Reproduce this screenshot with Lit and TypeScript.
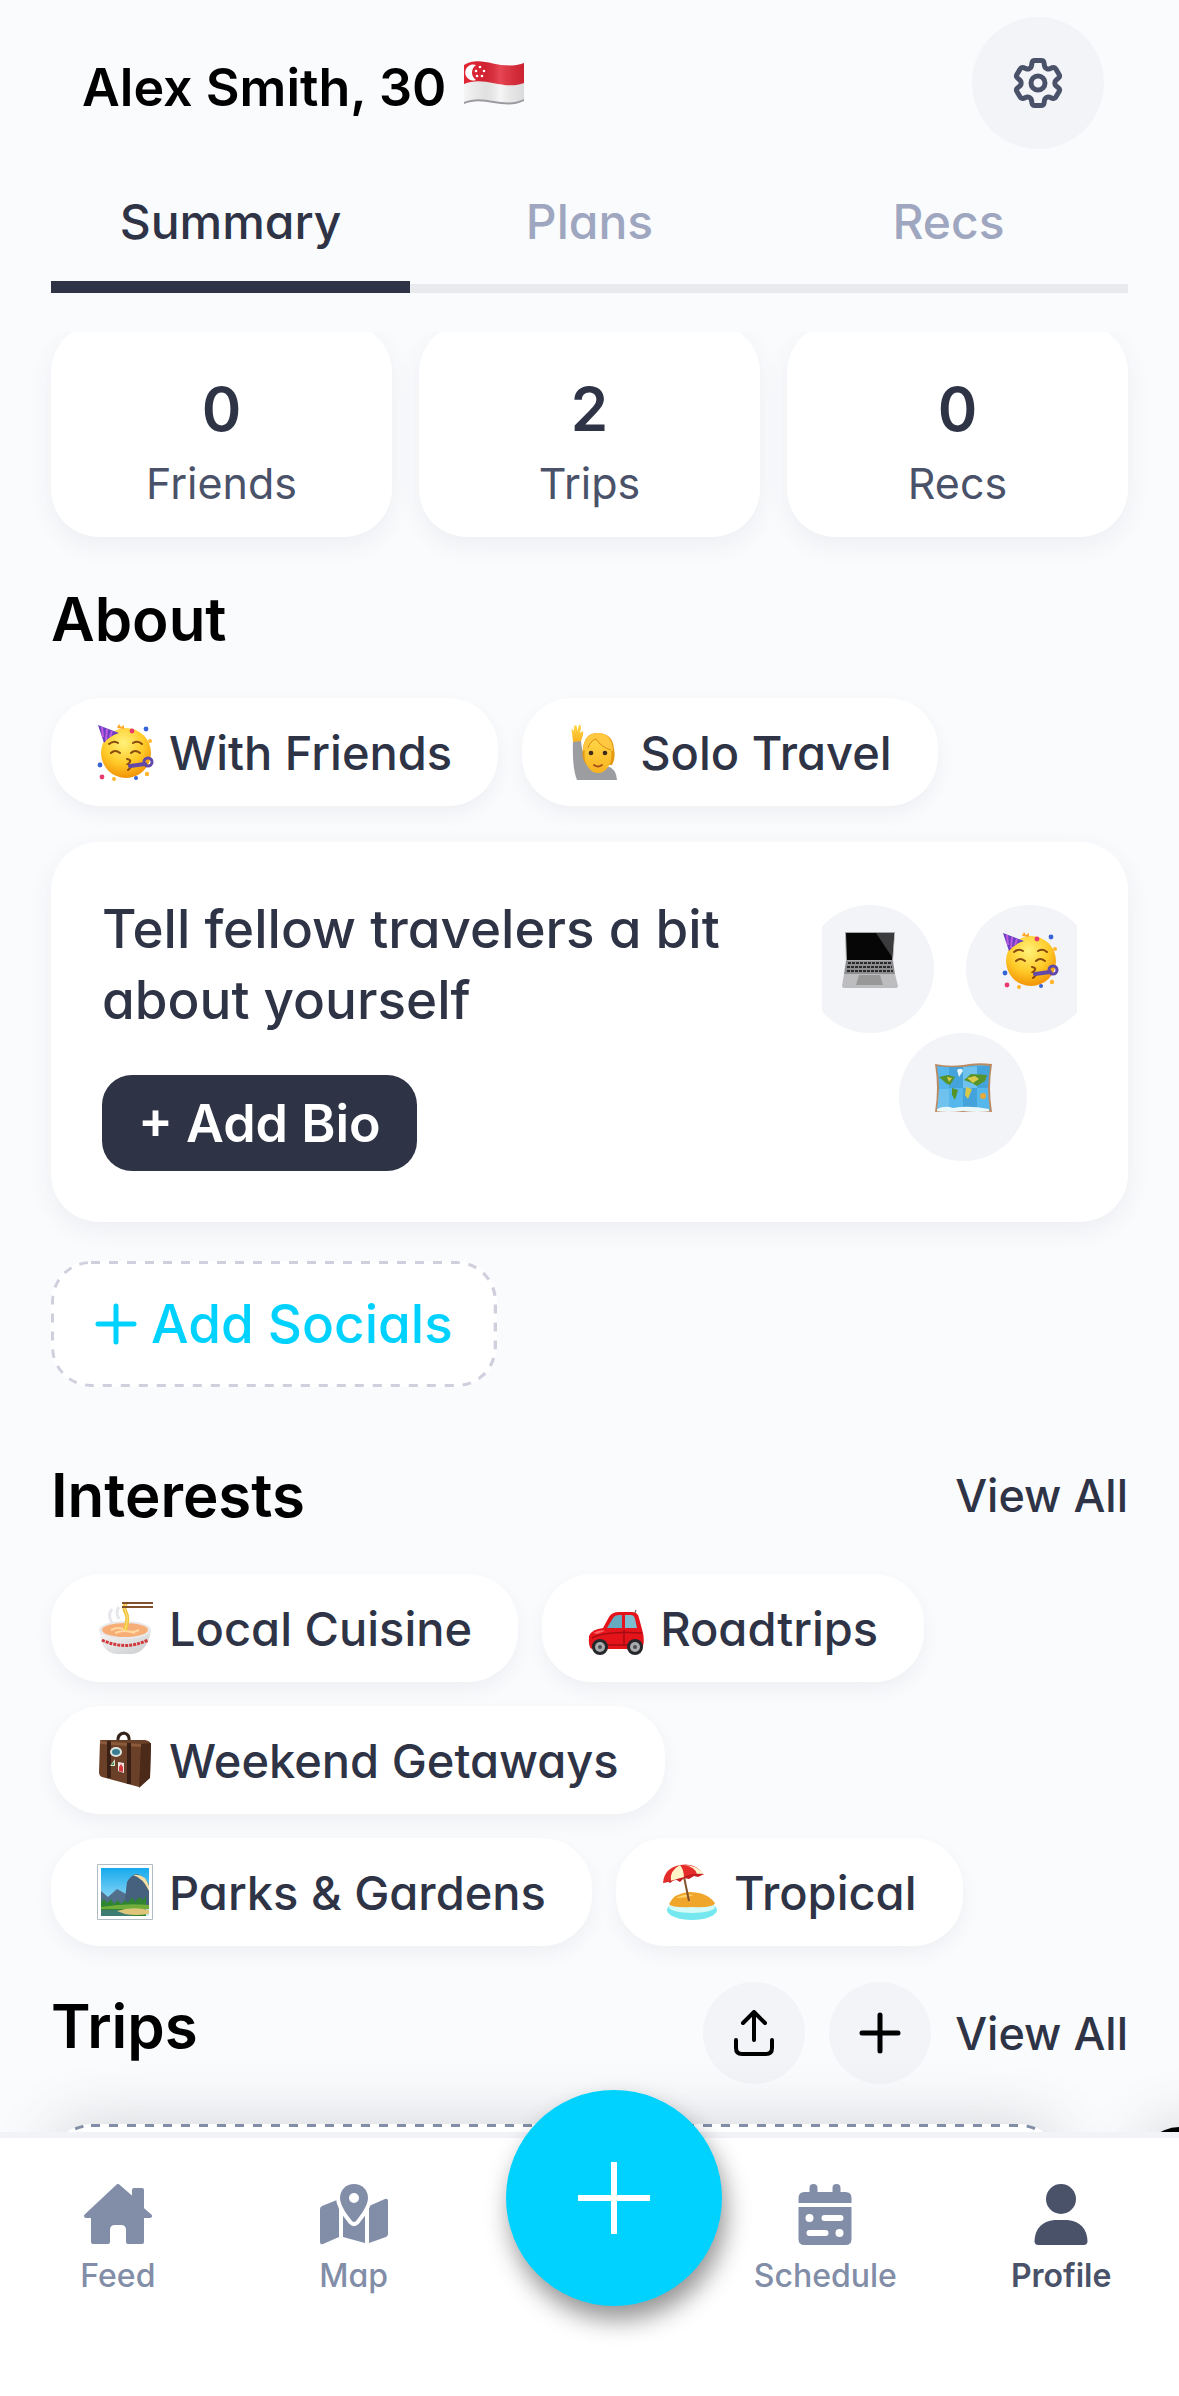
/**
 * @file Profile screen of the travel app: header, tabs, summary content and bottom navigation
 */

import { html, svg, css, LitElement } from "lit";
import { customElement, property, state } from "lit/decorators.js";
import { classMap } from "lit/directives/class-map.js";

const emojis = {
  flag: svg`
    <defs>
      <linearGradient id="wave" x1="0" x2="1" y1="0" y2="0">
        <stop offset="0" stop-color="#000" stop-opacity="0" />
        <stop offset="0.35" stop-color="#000" stop-opacity="0.08" />
        <stop offset="0.6" stop-color="#fff" stop-opacity="0.15" />
        <stop offset="1" stop-color="#000" stop-opacity="0.1" />
      </linearGradient>
    </defs>
    <path fill="#9b9b9f" d="M0 7C18-4 36 14 60 5V42C40 52 20 36 0 45Z" />
    <path fill="#f4f4f5" d="M0 6C18-5 36 13 60 4V40C40 50 20 34 0 43Z" />
    <path fill="#e32636" d="M0 6C18-5 36 13 60 4V24C40 32 20 16 0 25Z" />
    <path fill="url(#wave)" d="M0 6C18-5 36 13 60 4V40C40 50 20 34 0 43Z" />
    <path fill="#fff" d="M12 6a8 8 0 1 0 0 15a9 9 0 0 1 0-15Z" />
    <g fill="#fff">
      <circle cx="16" cy="8" r="1.3" /><circle cx="20" cy="12" r="1.3" />
      <circle cx="18" cy="17" r="1.3" /><circle cx="13" cy="17" r="1.3" />
      <circle cx="12" cy="12" r="1.3" />
    </g>`,
  party: svg`
    <defs>
      <radialGradient id="face" cx="0.45" cy="0.3" r="0.75">
        <stop offset="0" stop-color="#fff27a" />
        <stop offset="0.55" stop-color="#ffca28" />
        <stop offset="1" stop-color="#f08a00" />
      </radialGradient>
    </defs>
    <circle cx="29" cy="29" r="25" fill="url(#face)" />
    <path fill="#6b3fc4" d="M1 1L22 9Q12 12 7 19Z" />
    <path stroke="#c05be0" stroke-width="2" fill="none" d="M5 3L6 13M10 5L9 16M15 7L13 13" />
    <path fill="#ffa726" d="M20 4l2-4 2 3 3-2 0 4Z" />
    <path stroke="#8a4b10" stroke-width="2" stroke-linecap="round" fill="none"
      d="M12 20q5-4 9-1M36 19q5-3 9 1M14 29q4-4 9 0M34 29q4-4 9 0M30 35q6 1 1 5q6 1 0 6" />
    <path stroke="#6248a8" stroke-width="4" stroke-linecap="round" d="M33 42L48 40" />
    <circle cx="51" cy="38" r="4" fill="none" stroke="#6248a8" stroke-width="3" />
    <g fill="#3763d6"><circle cx="49" cy="5" r="2.4" /><circle cx="3" cy="41" r="2.4" /><circle cx="39" cy="54" r="2" /></g>
    <g fill="#e83a6b"><circle cx="35" cy="7" r="2.4" /><circle cx="5" cy="53" r="2.4" /></g>
    <g fill="#ffb52e"><circle cx="50" cy="50" r="2.2" /><circle cx="53" cy="17" r="2" /><circle cx="17" cy="55" r="2" /></g>`,
  person: svg`
    <defs>
      <linearGradient id="skin" x1="0" x2="0" y1="0" y2="1">
        <stop offset="0" stop-color="#ffd84a" />
        <stop offset="1" stop-color="#f9b31f" />
      </linearGradient>
    </defs>
    <path fill="#9c9da1" d="M5 17l8 0q1 12 6 22l20 3q9 2 10 14H9Q4 44 5 17Z" />
    <path fill="url(#skin)" d="M5 18L4 9Q3 5 5 5L6 8 6 2Q8 0 9 3L9 7 11 1Q13 0 13 4L12 9 15 7Q16 9 13 17Z" />
    <path fill="#e59a13" d="M15 24Q17 8 31 9Q45 10 46 25Q48 34 44 41H19Q13 36 15 24Z" />
    <ellipse cx="30" cy="31" rx="13.5" ry="18" fill="url(#skin)" />
    <path fill="#ffc840" d="M15 27Q15 9 31 9Q44 10 45 27Q34 25 28 16Q22 18 20 25Z" />
    <path stroke="#d98c10" stroke-width="1" fill="none" d="M20 24Q22 17 28 15Q33 23 43 26" />
    <circle cx="23" cy="29" r="2.3" fill="#3d2a1c" /><circle cx="37" cy="29" r="2.3" fill="#3d2a1c" />
    <path stroke="#a8521d" stroke-width="2" stroke-linecap="round" fill="none" d="M26 41q4 3 8 0" />`,
  laptop: svg`
    <path fill="#a7a7a9" d="M3 0H53L51 30H4Z" />
    <path fill="#060606" d="M4 1H52L50 28H5Z" />
    <path fill="#3b3b3d" d="M34 1H52L50 25Z" />
    <path fill="#8d8d8f" d="M4 29H51L53 42H2Z" />
    <path stroke="#29292b" stroke-width="2" stroke-dasharray="3 1" d="M6 31H49M5 35H50M5 39H51" />
    <path fill="#bdbdbf" d="M2 42H53L56 54Q56 56 53 56H3Q0 56 0 54Z" />
    <path fill="#989899" d="M17 43H38L41 53H14Z" />`,
  map: svg`
    <g transform="translate(0 3)">
      <path fill="#b98a62" d="M0 1Q14 4 28 2Q42-1 57 1Q53 25 57 49Q42 47 28 49Q14 47 0 49Q4 25 0 1Z" />
      <path fill="#55b7ec" d="M2 3Q14 5 28 4Q42 1 55 3Q51 25 55 47H2Q6 25 2 3Z" />
      <path fill="#3190c8" d="M14 4H28V25H14ZM42 3L55 3 53 25H42ZM28 25H42V47H28Z" opacity="0.5" />
      <path fill="#8acdf0" d="M4 26H14V46H2ZM28 4h14v21H28Z" opacity="0.5" />
      <path fill="#e8f7fa" d="M2 46Q10 42 18 45Q34 42 54 46V48H2ZM22 7q5-3 6 1l-4 6Z" />
      <path fill="#55932b" d="M4 14l9-2 7 2-5 8-3-1ZM17 25l6 2-3 10-3-5ZM29 17l7-6 16 1-2 6-8 5-5-3Z" />
      <path fill="#d9c94b" d="M12 14l5 1-3 4ZM32 15l8-2 4 3-6 4ZM31 24l6 2-4 10-3-4Z" />
      <circle cx="48" cy="33" r="3" fill="#e5aa38" />
    </g>`,
  noodles: svg`
    <defs>
      <linearGradient id="bowl" x1="0" x2="1" y1="0" y2="1">
        <stop offset="0" stop-color="#fafafa" />
        <stop offset="1" stop-color="#c9cacc" />
      </linearGradient>
    </defs>
    <path stroke="#e6e7ea" stroke-width="3" fill="none" d="M15 9q-5 6 0 14M22 7q-4 5 0 12" />
    <path fill="url(#bowl)" d="M2 30Q4 54 21 54H35Q51 52 54 30Z" />
    <ellipse cx="28" cy="30" rx="26" ry="9" fill="#e9e9eb" />
    <ellipse cx="28" cy="30" rx="23" ry="7" fill="#f7ae76" />
    <path stroke="#ffd9a0" stroke-width="2" fill="none" d="M14 30q8-4 14 0t14 0M18 33q10-4 20 0" />
    <path stroke="#d0393b" stroke-width="3" stroke-dasharray="3 1" fill="none" d="M5 40Q28 51 51 40" />
    <path stroke="#f2c53d" stroke-width="4" fill="none" d="M29 3q-3 5 0 10t-1 17" />
    <path stroke="#fbe48a" stroke-width="1" fill="none" d="M29 3q-3 5 0 10t-1 17" />
    <path stroke="#83502e" stroke-width="2" d="M25 3H56M25 7H56" />`,
  car: svg`
    <path stroke="#444" stroke-width="1" d="M46 15l2-5" />
    <path fill="#e5141b" d="M1 36Q4 29 15 28L21 17Q24 12 31 12H44Q50 12 51 18L55 33Q57 42 54 49H4Q0 48 1 36Z" />
    <path fill="#65aabf" d="M19 28L25 18Q27 15 31 15H34V28Z" />
    <path fill="#7dbfd0" d="M37 15H43Q46 15 47 19L49 28H37Z" />
    <path stroke="#a40d12" stroke-width="1.5" fill="none" d="M4 38Q17 31 54 33M36 30V46M4 45H50" />
    <path fill="#ff6262" d="M5 33q8-4 12-2l-8 3Z" />
    <circle cx="12" cy="47" r="8" fill="#26272b" /><circle cx="12" cy="47" r="5" fill="#a9abae" />
    <circle cx="47" cy="47" r="8" fill="#26272b" /><circle cx="47" cy="47" r="5" fill="#a9abae" />
    <circle cx="12" cy="47" r="2" fill="#4d4e52" /><circle cx="47" cy="47" r="2" fill="#4d4e52" />`,
  suitcase: svg`
    <path stroke="#35241b" stroke-width="3" fill="none" d="M21 10Q20 2 27 1Q33 2 32 10" />
    <path fill="#6a4029" d="M3 9Q2 8 5 8L48 8Q54 9 54 13L53 45 42 55 5 45Q2 44 2 40Z" />
    <path fill="#4b2a1a" d="M44 12L54 11 53 46 42 56Z" />
    <path fill="#8a5a3b" d="M3 9L44 12V15L3 12Z" />
    <path stroke="#382016" stroke-width="4" d="M12 9V46M32 11V52" />
    <ellipse cx="19" cy="20" rx="6" ry="5" fill="#dfe6e2" />
    <ellipse cx="19" cy="20" rx="4" ry="3" fill="#397d91" />
    <path fill="#d9e3d0" d="M13 34l5-7v7Z" /><path fill="#43945b" d="M14 33l3-3v3Z" />
    <path fill="#ebe5e2" d="M21 30l6 1v10l-6-2Z" /><path fill="#d8353c" d="M22 39v-4l2-3 2 3v5Z" />`,
  park: svg`
    <defs>
      <linearGradient id="sky" x1="0" x2="0" y1="0" y2="1">
        <stop offset="0" stop-color="#16a9ed" />
        <stop offset="1" stop-color="#c8effb" />
      </linearGradient>
    </defs>
    <path fill="#fff" stroke="#b4bcc3" d="M0.5 0.5H55.5V55.5H0.5Z" />
    <path fill="url(#sky)" d="M4 4H52V52H4Z" />
    <path fill="#526f8c" d="M4 27l7 6 9-8 9 5V44H4Z" />
    <path fill="#45617d" d="M27 43l3-25q5-8 10-8 9 3 12 11V43Z" />
    <path fill="#f3dfa5" d="M36 11q12-2 16 11V27Q46 14 36 11Z" />
    <path fill="#2f8532" d="M4 38l3-3 3 4 4-4 3 5 4-4 3 4 4-4 3 3 4-6 3 5 4-5 4 3 3-4V52H4Z" />
    <path fill="#70ad3b" d="M4 43q25-4 48-2v4H4Z" />
    <path fill="#3e7b73" d="M4 46H28L35 52H4Z" />
    <path fill="#dfc579" d="M20 47Q35 42 52 46V50Q38 52 28 50Z" />`,
  beach: svg`
    <ellipse cx="30" cy="46" rx="25" ry="10" fill="#74e7ef" />
    <ellipse cx="30" cy="43" rx="23" ry="6" fill="#d5fbf8" />
    <path fill="#f0a52b" d="M7 40Q12 29 27 28Q45 28 53 39Q52 44 30 43Q10 44 7 40Z" />
    <path fill="#ffd16b" d="M14 34Q22 29 32 31Q25 34 14 34Z" />
    <path stroke="#80512a" stroke-width="2" d="M21 8L27 37" />
    <path fill="#e42d2b" d="M1 19Q2 4 18 1Q34-2 42 11Q31 10 22 14Q11 17 1 19Z" />
    <path fill="#fff3c9" d="M18 1Q7 7 9 17L22 14Q22 6 18 1ZM22 1Q33 3 35 10L42 11Q36 1 22 1Z" />
    <path fill="#c61d20" d="M1 19l4-2 3 2 5-4 5 3 4-4 5 1 5-3 4 1 6-3Q28 9 22 13Z" />`,
};

const gearPath =
  "M9.594 3.94c.09-.542.56-.94 1.11-.94h2.593c.55 0 1.02.398 1.11.94l.213 1.281c.063.374.313.686.645.87.074.04.147.083.22.127.325.196.72.257 1.075.124l1.217-.456a1.125 1.125 0 0 1 1.37.49l1.296 2.247a1.125 1.125 0 0 1-.26 1.431l-1.003.827c-.293.241-.438.613-.43.992a7.723 7.723 0 0 1 0 .255c-.008.378.137.75.43.991l1.004.827c.424.35.534.955.26 1.43l-1.298 2.247a1.125 1.125 0 0 1-1.369.491l-1.217-.456c-.355-.133-.75-.072-1.076.124a6.47 6.47 0 0 1-.22.128c-.331.183-.581.495-.644.869l-.213 1.281c-.09.543-.56.94-1.11.94h-2.594c-.55 0-1.019-.398-1.11-.94l-.213-1.281c-.062-.374-.312-.686-.644-.87a6.52 6.52 0 0 1-.22-.127c-.325-.196-.72-.257-1.076-.124l-1.217.456a1.125 1.125 0 0 1-1.369-.49l-1.297-2.247a1.125 1.125 0 0 1 .26-1.431l1.004-.827c.292-.24.437-.613.43-.991a6.932 6.932 0 0 1 0-.255c.007-.38-.138-.751-.43-.992l-1.004-.827a1.125 1.125 0 0 1-.26-1.43l1.297-2.247a1.125 1.125 0 0 1 1.37-.491l1.216.456c.356.133.751.072 1.076-.124.072-.044.146-.086.22-.128.332-.183.582-.495.644-.869l.214-1.28Z";

const navIcons = {
  feed: svg`<path fill="currentColor" stroke="currentColor" stroke-width="4" stroke-linejoin="round"
    d="M34 2L50 16V6H58V25L66 32H58V58H44V46Q44 39 37 39H31Q24 39 24 46V58H9V32H2Z" />`,
  map: svg`
    <path fill="currentColor" d="M2 22L17 16L19 21V53L3 60Q0 61 0 58V25Q0 23 2 22Z" />
    <path fill="currentColor" d="M23 24H45V59L23 53Z" />
    <path fill="currentColor" d="M49 22L65 15Q68 14 68 17V50Q68 52 66 53L49 59Z" />
    <path fill="currentColor" stroke="#fff" stroke-width="8" paint-order="stroke"
      d="M34 0C42 0 48 6 48 14C48 21 41 31 36 37Q34 39 32 37C27 31 20 21 20 14C20 6 26 0 34 0Z" />
    <ellipse cx="34" cy="14" rx="5" ry="5" fill="#fff" />`,
  schedule: svg`
    <g transform="translate(7.5 0)">
      <path fill="currentColor" d="M0 19V14Q0 8 6 8H11V4Q11 0 15 0T19 4V8H34V4Q34 0 38 0T42 4V8H47Q53 8 53 14V19Z" />
      <path fill="currentColor" d="M0 23H53V55Q53 61 47 61H6Q0 61 0 55Z" />
      <path stroke="#fff" stroke-width="6" stroke-linecap="round" d="M26 34H42M11 49H27" />
      <circle cx="11" cy="34" r="4" fill="#fff" /><circle cx="41" cy="49" r="4" fill="#fff" />
    </g>`,
  profile: svg`
    <g transform="translate(7.5 0)">
      <circle cx="26.5" cy="15" r="15" fill="currentColor" />
      <path fill="currentColor" d="M20 36H33Q52 38 53 57Q53 61 49 61H4Q0 61 0 57Q1 38 20 36Z" />
    </g>`,
};

@customElement("emoji-icon")
export class EmojiIcon extends LitElement {
  static styles = css`
    :host {
      display: inline-flex;
      flex: none;
    }

    .glyph {
      block-size: 56px;
      display: block;
      inline-size: 56px;
      overflow: visible;
    }
  `;

  @property() name: keyof typeof emojis = "party";

  render() {
    return html`<svg class="glyph" viewBox="0 0 56 56" aria-hidden="true">${emojis[this.name]}</svg>`;
  }
}

@customElement("tag-chip")
export class TagChip extends LitElement {
  static styles = css`
    :host {
      align-items: center;
      background: white;
      block-size: 108px;
      border-radius: 50px;
      box-shadow: 0 8px 18px hsl(225 20% 30% / 0.06);
      box-sizing: border-box;
      color: #2e3446;
      display: inline-flex;
      font-size: 47px;
      font-weight: 500;
      gap: 16px;
      padding-inline: 46px;
      white-space: nowrap;
    }
  `;

  @property() emoji: keyof typeof emojis = "party";

  render() {
    return html`<emoji-icon name=${this.emoji}></emoji-icon><slot></slot>`;
  }
}

@customElement("app-root")
export class AppRoot extends LitElement {
  static styles = css`
    *,
    *::after,
    *::before {
      box-sizing: border-box;
    }

    :host {
      background: #fafbfd;
      block-size: 100vh;
      color: #2e3446;
      display: flex;
      flex-direction: column;
      font-family: Inter, "Open Sans", sans-serif;
      font-feature-settings: "cv11";
      overflow: hidden;
    }

    h1,
    h2,
    p {
      margin: 0;
    }

    button {
      background: none;
      border: 0;
      color: inherit;
      cursor: pointer;
      font: inherit;
      font-feature-settings: inherit;
      padding: 0;
    }

    a {
      color: inherit;
      text-decoration: none;
    }

    svg {
      display: block;
      flex: none;
    }

    .header {
      align-items: center;
      display: flex;
      justify-content: space-between;
      padding: 17px 75px 0 82px;
    }

    .name {
      align-items: center;
      color: black;
      display: flex;
      font-size: 52px;
      font-weight: 600;
      gap: 18px;
      padding-block-start: 8px;
    }

    .round {
      align-items: center;
      background: #f3f4f8;
      block-size: 102px;
      border-radius: 50%;
      color: black;
      display: flex;
      inline-size: 102px;
      justify-content: center;
    }

    .settings {
      block-size: 132px;
      color: #4a526a;
      inline-size: 132px;
    }

    .tabs {
      box-shadow: inset 0 -9px #e9eaee;
      display: grid;
      grid-template-columns: repeat(3, 1fr);
      margin: 12px 51px 39px;
    }

    .tab {
      block-size: 132px;
      border-block-end: 12px solid transparent;
      color: #9ea6c0;
      font-size: 48px;
      font-weight: 500;
    }

    .tab.active {
      border-color: #2e3446;
      color: #2e3446;
    }

    .content {
      flex: 1;
      min-block-size: 0;
      overflow: hidden;
      padding-inline: 51px;
    }

    /* the list is scrolled a few pixels under the tabs */
    .stats {
      display: grid;
      gap: 27px;
      grid-template-columns: repeat(3, 1fr);
      margin-block: -8px 44px;
    }

    .stat,
    .bio {
      background: white;
      border-radius: 48px;
      box-shadow: 0 8px 24px hsl(225 20% 30% / 0.07);
    }

    .stat {
      align-items: center;
      block-size: 213px;
      color: #4a526a;
      display: flex;
      flex-direction: column;
      font-size: 43px;
      gap: 4px;
      padding-block-start: 50px;
    }

    .stat .count {
      color: #2e3446;
      font-size: 60px;
      font-weight: 600;
      line-height: 70px;
    }

    .stat .label {
      line-height: 70px;
    }

    .row {
      align-items: center;
      display: flex;
      justify-content: space-between;
    }

    .title {
      color: black;
      font-size: 60px;
      font-weight: 600;
      line-height: 76px;
    }

    .actions {
      align-items: center;
      display: flex;
      gap: 24px;
    }

    .view-all {
      font-size: 45px;
      font-weight: 500;
    }

    .chips {
      display: flex;
      flex-wrap: wrap;
      gap: 24px;
      margin-block: 41px 36px;
    }

    .bio {
      display: flex;
      justify-content: space-between;
      padding: 51px;
    }

    .bio .copy {
      align-items: start;
      display: flex;
      flex-direction: column;
      gap: 39px;
      padding-block-start: 1px;
    }

    .prompt {
      font-size: 53px;
      font-weight: 500;
      line-height: 71px;
      max-inline-size: 660px;
    }

    .add-bio {
      background: #2e3446;
      block-size: 96px;
      border-radius: 30px;
      color: white;
      font-size: 52px;
      font-weight: 600;
      padding-inline: 36px;
    }

    .bubbles {
      align-content: start;
      display: flex;
      flex-direction: column;
      inline-size: 255px;
      margin-block-start: 12px;
      overflow: hidden;
    }

    .pair {
      align-self: center;
      display: flex;
      gap: 32px;
    }

    .bubble {
      background: #f3f4f8;
      block-size: 128px;
      border-radius: 50%;
      display: flex;
      flex: none;
      inline-size: 128px;
      justify-content: center;
      padding-block-start: 27px;
    }

    .bubble.low {
      align-self: center;
      margin-inline-start: 27px;
    }

    .dashed {
      background: white;
      border-radius: 40px;
      position: relative;
    }

    .outline {
      block-size: 100%;
      border-radius: inherit;
      inline-size: 100%;
      inset: 0;
      overflow: hidden;
      pointer-events: none;
      position: absolute;
    }

    .outline rect {
      fill: none;
      stroke: #d0cfdd;
      stroke-dasharray: 9 9;
      stroke-width: 6;
    }

    .socials {
      align-items: center;
      block-size: 126px;
      color: #00d2ff;
      display: flex;
      font-size: 53px;
      font-weight: 500;
      gap: 14px;
      margin-block: 39px 70px;
      padding-inline: 44px;
    }

    .trips-row {
      margin-block-start: 35px;
    }

    .trips-row .title {
      padding-block-end: 14px;
    }

    .trips {
      display: flex;
      gap: 80px;
      margin: 40px -51px 0 0;
    }

    .trip {
      block-size: 420px;
      box-shadow: 0 0 60px hsl(200 10% 30% / 0.22);
      flex: 0 0 1009px;
    }

    .trip .outline rect {
      stroke: #828da8;
    }

    .trip.photo {
      background: black;
      margin-block-start: 3px;
    }

    .nav {
      background: white;
      block-size: 264px;
      border-block-start: 6px solid #f2f3f6;
      display: grid;
      flex: none;
      grid-template-columns: repeat(5, 1fr);
      position: relative;
    }

    .nav-item {
      align-items: center;
      color: #828da8;
      display: flex;
      flex-direction: column;
      font-size: 32px;
      font-weight: 500;
      gap: 10px;
      padding-block-start: 46px;
    }

    .nav-item.schedule {
      grid-column: 4;
    }

    .nav-item.active {
      color: #4a526a;
      font-weight: 600;
    }

    .fab {
      align-items: center;
      background: #00d2ff;
      block-size: 216px;
      border-radius: 50%;
      box-shadow: 4px 14px 24px hsl(0 0% 0% / 0.42);
      display: flex;
      inline-size: 216px;
      inset-block-start: -48px;
      inset-inline-start: calc(50% - 84px);
      justify-content: center;
      position: absolute;
    }
  `;

  @state() private tab = "Summary";

  private stats = [
    { count: 0, label: "Friends" },
    { count: 2, label: "Trips" },
    { count: 0, label: "Recs" },
  ];

  private interests = [
    { emoji: "noodles", label: "Local Cuisine" },
    { emoji: "car", label: "Roadtrips" },
    { emoji: "suitcase", label: "Weekend Getaways" },
    { emoji: "park", label: "Parks & Gardens" },
    { emoji: "beach", label: "Tropical" },
  ];

  private navItem(icon: keyof typeof navIcons, label: string) {
    const active = icon === "profile";
    return html`<a href="#${icon}" class=${classMap({ "nav-item": true, [icon]: true, active })}>
      <svg width="68" height="62" viewBox="0 0 68 62" aria-hidden="true">${navIcons[icon]}</svg>
      ${label}
    </a>`;
  }

  private outline() {
    return html`<svg class="outline" aria-hidden="true"><rect width="100%" height="100%" rx="40" /></svg>`;
  }

  private plus(size: number) {
    return html`<svg width=${size} height=${size} viewBox="0 0 42 42" aria-hidden="true">
      <path stroke="currentColor" stroke-width="5" stroke-linecap="round" d="M21 3V39M3 21H39" />
    </svg>`;
  }

  render() {
    return html`
      <header class="header">
        <h1 class="name">Alex Smith, 30 <emoji-icon name="flag"></emoji-icon></h1>
        <button class="round settings" aria-label="Settings">
          <svg width="60" height="60" viewBox="0 0 24 24" fill="none" stroke="currentColor" stroke-width="2">
            <path d=${gearPath} />
            <circle cx="12" cy="12" r="2.8" />
          </svg>
        </button>
      </header>

      <nav class="tabs" aria-label="Profile sections">
        ${["Summary", "Plans", "Recs"].map(
          (name) => html`<button
            class=${classMap({ tab: true, active: this.tab === name })}
            @click=${() => (this.tab = name)}>${name}</button>`
        )}
      </nav>

      <main class="content">
        <div class="stats">
          ${this.stats.map(
            ({ count, label }) => html`<div class="stat">
              <span class="count">${count}</span>
              <span class="label">${label}</span>
            </div>`
          )}
        </div>

        <h2 class="title">About</h2>
        <div class="chips">
          <tag-chip emoji="party">With Friends</tag-chip>
          <tag-chip emoji="person">Solo Travel</tag-chip>
        </div>

        <section class="bio">
          <div class="copy">
            <p class="prompt">Tell fellow travelers a bit about yourself</p>
            <button class="add-bio">+ Add Bio</button>
          </div>
          <div class="bubbles">
            <div class="pair">
              <div class="bubble"><emoji-icon name="laptop"></emoji-icon></div>
              <div class="bubble"><emoji-icon name="party"></emoji-icon></div>
            </div>
            <div class="bubble low"><emoji-icon name="map"></emoji-icon></div>
          </div>
        </section>

        <button class="dashed socials">${this.outline()} ${this.plus(42)} Add Socials</button>

        <div class="row">
          <h2 class="title">Interests</h2>
          <a class="view-all" href="#interests">View All</a>
        </div>
        <div class="chips">
          ${this.interests.map(({ emoji, label }) => html`<tag-chip emoji=${emoji}>${label}</tag-chip>`)}
        </div>

        <div class="row trips-row">
          <h2 class="title">Trips</h2>
          <div class="actions">
            <button class="round" aria-label="Share trips">
              <svg width="40" height="46" viewBox="0 0 40 46" fill="none" stroke="currentColor"
                stroke-width="4" stroke-linecap="round" stroke-linejoin="round" aria-hidden="true">
                <path d="M20 30V3M9 13L20 2L31 13M2 30V38Q2 44 8 44H32Q38 44 38 38V30" />
              </svg>
            </button>
            <button class="round" aria-label="Add trip">${this.plus(42)}</button>
            <a class="view-all" href="#trips">View All</a>
          </div>
        </div>
        <div class="trips">
          <div class="dashed trip">${this.outline()}</div>
          <div class="dashed trip photo"></div>
        </div>
      </main>

      <nav class="nav" aria-label="Main">
        ${this.navItem("feed", "Feed")} ${this.navItem("map", "Map")}
        <button class="fab" aria-label="Create">
          <svg width="72" height="72" viewBox="0 0 72 72" stroke="white" stroke-width="6" aria-hidden="true">
            <path d="M36 0V72M0 36H72" />
          </svg>
        </button>
        ${this.navItem("schedule", "Schedule")} ${this.navItem("profile", "Profile")}
      </nav>
    `;
  }
}
